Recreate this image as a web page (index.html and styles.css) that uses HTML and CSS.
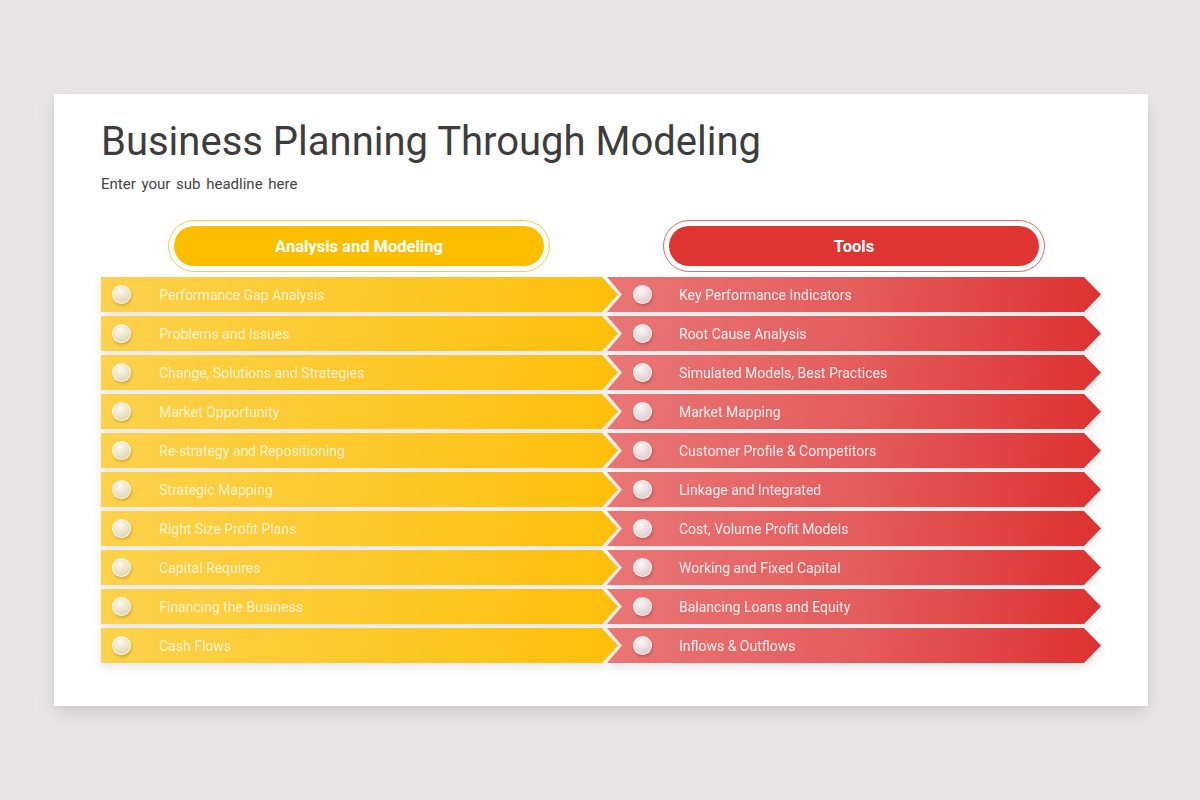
FILE: index.html
```html
<!DOCTYPE html>
<html>
<head>
<meta charset="utf-8">
<link rel="stylesheet" href="styles.css">
</head>
<body>
<div class="slide">
  <h1 class="title">Business Planning Through Modeling</h1>
  <p class="sub">Enter your sub headline here</p>
  <div class="heads">
    <div class="pill-wrap pill-y"><div class="pill">Analysis and Modeling</div></div>
    <div class="pill-wrap pill-r"><div class="pill">Tools</div></div>
  </div>
  <div class="rows">
    <div class="row"><div class="cell cy"><span class="dot"></span><span class="txt">Performance Gap Analysis</span></div><div class="cell cr"><span class="dot"></span><span class="txt">Key Performance Indicators</span></div></div>
    <div class="row"><div class="cell cy"><span class="dot"></span><span class="txt">Problems and Issues</span></div><div class="cell cr"><span class="dot"></span><span class="txt">Root Cause Analysis</span></div></div>
    <div class="row"><div class="cell cy"><span class="dot"></span><span class="txt">Change, Solutions and Strategies</span></div><div class="cell cr"><span class="dot"></span><span class="txt">Simulated Models, Best Practices</span></div></div>
    <div class="row"><div class="cell cy"><span class="dot"></span><span class="txt">Market Opportunity</span></div><div class="cell cr"><span class="dot"></span><span class="txt">Market Mapping</span></div></div>
    <div class="row"><div class="cell cy"><span class="dot"></span><span class="txt">Re-strategy and Repositioning</span></div><div class="cell cr"><span class="dot"></span><span class="txt">Customer Profile &amp; Competitors</span></div></div>
    <div class="row"><div class="cell cy"><span class="dot"></span><span class="txt">Strategic Mapping</span></div><div class="cell cr"><span class="dot"></span><span class="txt">Linkage and Integrated</span></div></div>
    <div class="row"><div class="cell cy"><span class="dot"></span><span class="txt">Right Size Profit Plans</span></div><div class="cell cr"><span class="dot"></span><span class="txt">Cost, Volume Profit Models</span></div></div>
    <div class="row"><div class="cell cy"><span class="dot"></span><span class="txt">Capital Requires</span></div><div class="cell cr"><span class="dot"></span><span class="txt">Working and Fixed Capital</span></div></div>
    <div class="row"><div class="cell cy"><span class="dot"></span><span class="txt">Financing the Business</span></div><div class="cell cr"><span class="dot"></span><span class="txt">Balancing Loans and Equity</span></div></div>
    <div class="row"><div class="cell cy"><span class="dot"></span><span class="txt">Cash Flows</span></div><div class="cell cr"><span class="dot"></span><span class="txt">Inflows &amp; Outflows</span></div></div>
  </div>
</div>
</body>
</html>
```

FILE: styles.css
```css
html, body {
  margin: 0;
  padding: 0;
  background: #e8e6e7;
  width: 1200px;
  height: 800px;
  overflow: hidden;
  font-family: Roboto, "Liberation Sans", sans-serif;
}

.slide {
  box-sizing: border-box;
  margin: 94px 0 0 54px;
  width: 1094px;
  height: 612px;
  background: #ffffff;
  padding: 28px 0 0 47px;
  box-shadow: 0 8px 18px rgba(0, 0, 0, 0.10), 0 1px 4px rgba(0, 0, 0, 0.06);
}

.title {
  margin: 0;
  font-size: 40px;
  line-height: 40px;
  font-weight: 400;
  color: #3d3d3d;
  letter-spacing: 0;
}

.sub {
  margin: 15px 0 0 0;
  font-size: 15px;
  line-height: 15px;
  color: #454545;
  word-spacing: 2px;
}

.heads {
  display: flex;
  margin-top: 28px;
  height: 52px;
}

.pill-wrap {
  box-sizing: border-box;
  width: 382px;
  height: 52px;
  border-radius: 26px;
  padding: 5px 5px;
  background: #fff;
}

.pill-y {
  margin-left: 67px;
  border: 1.5px solid #f7cc4a;
}

.pill-r {
  margin-left: 113px;
  border: 1.5px solid #e36a6a;
}

.pill {
  height: 100%;
  border-radius: 20px;
  display: flex;
  align-items: center;
  justify-content: center;
  color: #fff;
  font-size: 16.5px;
  font-weight: 700;
}

.pill-y .pill { background: #fcbf00; }
.pill-r .pill { background: #de3532; }

.rows {
  margin-top: 5px;
  display: flex;
  flex-direction: column;
  gap: 4px;
  filter: drop-shadow(0 4px 5px rgba(0, 0, 0, 0.10));
}

.row {
  display: flex;
  height: 35px;
}

.cell {
  box-sizing: border-box;
  height: 35px;
  display: flex;
  align-items: center;
  font-size: 14px;
}

.cy {
  width: 517px;
  padding-left: 11px;
  background: linear-gradient(100deg, #fcd24c 0%, #fdc828 55%, #fdbf0a 100%);
  clip-path: polygon(0 0, calc(100% - 16px) 0, 100% 50%, calc(100% - 16px) 100%, 0 100%);
  color: #fff3d2;
  position: relative;
  z-index: 2;
}

.cr {
  width: 494px;
  margin-left: -11px;
  padding-left: 26px;
  background: linear-gradient(100deg, #e97676 0%, #e45d5d 50%, #de3131 100%);
  clip-path: polygon(0 0, calc(100% - 17px) 0, 100% 50%, calc(100% - 17px) 100%, 0 100%, 15px 50%);
  color: #fdeeee;
}

.dot {
  flex: none;
  width: 19px;
  height: 19px;
  border-radius: 50%;
  box-sizing: border-box;
  border: 1px solid rgba(255, 255, 255, 0.7);
  box-shadow: 1px 2px 3px rgba(0, 0, 0, 0.18);
}

.cy .dot {
  background: radial-gradient(circle at 40% 30%, #fbf8ee 0%, #ece4c8 50%, #d5c9a0 100%);
}

.cr .dot {
  background: radial-gradient(circle at 40% 30%, #fbf6f6 0%, #e9dcdd 50%, #d5bfc1 100%);
}

.cy .txt { margin-left: 28px; }
.cr .txt { margin-left: 27px; }
```
